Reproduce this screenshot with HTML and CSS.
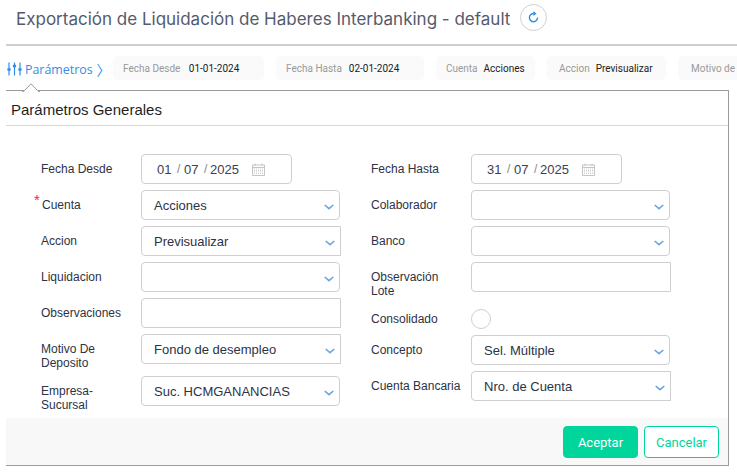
FILE: index.html
```html
<!DOCTYPE html>
<html lang="es">
<head>
<meta charset="utf-8">
<title>Exportación de Liquidación de Haberes Interbanking</title>
<link rel="stylesheet" href="styles.css">
</head>
<body>
<svg class="defs" width="0" height="0" aria-hidden="true">
  <symbol id="chev" viewBox="0 0 10 6"><path d="M.7 1 5 4.7 9.3 1" fill="none" stroke="#6aa5e2" stroke-width="1.6"/></symbol>
  <symbol id="cal" viewBox="0 0 13 13"><path d="M.5 2h12v10.5H.5zM.5 4.5h12M3 .5v2.5M10 .5v2.5" fill="none" stroke="#c4c4c4"/><path d="M2 6h9M2 7.5h9M2 9h9M2 10.5h9" stroke="#cfcfcf" stroke-dasharray="1 1"/></symbol>
</svg>
<header class="top">
  <h1 class="title">Exportación de Liquidación de Haberes Interbanking - default</h1>
  <button class="refresh" aria-label="Actualizar">
    <svg width="13" height="13" viewBox="0 0 13 13"><path d="M7.2 2.6A4.1 4.1 0 1 0 10.6 6.6" fill="none" stroke="#2f8fe8" stroke-width="1.4"/><path d="M6.4.2 9.6 2.6 6.4 5z" fill="#2f8fe8"/></svg>
  </button>
</header>
<nav class="filters">
  <div class="toggle">
    <svg width="15" height="14" viewBox="0 0 15 14"><path d="M2 .5v13M7.5 .5v13M13 .5v13" stroke="#2f8fe8" stroke-width="1.2"/><path d="M.4 7.5h3.2M5.900 4h3.200M11.400 7.500h3.200" stroke="#2f8fe8" stroke-width="2.6"/></svg>
    <span>Parámetros</span><span class="angle">〉</span>
  </div>
  <div class="chip chip-a"><span class="k">Fecha Desde</span><span class="v">01-01-2024</span></div>
  <div class="chip chip-b"><span class="k">Fecha Hasta</span><span class="v">02-01-2024</span></div>
  <div class="chip chip-c"><span class="k">Cuenta</span><span class="v">Acciones</span></div>
  <div class="chip chip-d"><span class="k">Accion</span><span class="v">Previsualizar</span></div>
  <div class="chip chip-e"><span class="k">Motivo de</span></div>
</nav>
<main class="panel">
  <svg class="notch" width="18" height="9" viewBox="0 0 18 9"><path d="M0 8.500h1.500L9 .8l7.500 7.700H18" fill="#fff" stroke="#9a9a9a"/><path d="M2.500 8.500h13" stroke="#fff" stroke-width="1.500"/></svg>
  <h2 class="panel-title">Parámetros Generales</h2>
  <div class="form">
    <div class="col">
      <div class="row"><label>Fecha Desde</label><div class="ctl date"><span class="d">01</span><i>/</i><span class="d">07</span><i>/</i><span class="y">2025</span><svg class="cal" width="13" height="13"><use href="#cal"/></svg></div></div>
      <div class="row"><label class="req">Cuenta</label><div class="ctl sel">Acciones<svg class="chev" width="10" height="6"><use href="#chev"/></svg></div></div>
      <div class="row"><label>Accion</label><div class="ctl sel wide">Previsualizar<svg class="chev" width="10" height="6"><use href="#chev"/></svg></div></div>
      <div class="row"><label>Liquidacion</label><div class="ctl sel"><svg class="chev" width="10" height="6"><use href="#chev"/></svg></div></div>
      <div class="row"><label>Observaciones</label><div class="ctl wide"></div></div>
      <div class="row tall"><label class="two">Motivo De Deposito</label><div class="ctl sel wide">Fondo de desempleo<svg class="chev" width="10" height="6"><use href="#chev"/></svg></div></div>
      <div class="row"><label class="two">Empresa-Sucursal</label><div class="ctl sel">Suc. HCMGANANCIAS<svg class="chev" width="10" height="6"><use href="#chev"/></svg></div></div>
    </div>
    <div class="col">
      <div class="row"><label>Fecha Hasta</label><div class="ctl date"><span class="d">31</span><i>/</i><span class="d">07</span><i>/</i><span class="y">2025</span><svg class="cal" width="13" height="13"><use href="#cal"/></svg></div></div>
      <div class="row"><label>Colaborador</label><div class="ctl sel"><svg class="chev" width="10" height="6"><use href="#chev"/></svg></div></div>
      <div class="row"><label>Banco</label><div class="ctl sel"><svg class="chev" width="10" height="6"><use href="#chev"/></svg></div></div>
      <div class="row"><label class="two">Observación Lote</label><div class="ctl wide"></div></div>
      <div class="row radio-row"><label>Consolidado</label><span class="radio"></span></div>
      <div class="row"><label>Concepto</label><div class="ctl sel">Sel. Múltiple<svg class="chev" width="10" height="6"><use href="#chev"/></svg></div></div>
      <div class="row"><label>Cuenta Bancaria</label><div class="ctl sel wide">Nro. de Cuenta<svg class="chev" width="10" height="6"><use href="#chev"/></svg></div></div>
    </div>
  </div>
  <footer class="foot">
    <button class="btn ok">Aceptar</button>
    <button class="btn cancel">Cancelar</button>
  </footer>
</main>
</body>
</html>
```
FILE: styles.css
```css
* { box-sizing: border-box; }
html, body { margin: 0; height: 474px; overflow: hidden; background: #fff; }
body { font-family: "Liberation Sans", Arial, sans-serif; color: #2c3345; padding-left: 6px; }
.defs { position: absolute; }

.top { height: 46px; border-bottom: 2px solid #cfcfcf; display: flex; align-items: flex-start; padding: 4px 0 0 10px; }
.title { margin: 0; font: 400 17px/30px Inter, sans-serif; color: #555b6b; white-space: nowrap; }
.refresh { width: 27px; height: 27px; margin-left: 10px; border: 1px solid #cfcfcf; border-radius: 50%; background: #fff; padding: 0; display: flex; align-items: center; justify-content: center; }

.filters { height: 44px; display: flex; align-items: center; width: 731px; overflow: hidden; }
.toggle { width: 107px; flex: none; display: flex; align-items: center; color: #2f8fe8; font: 12.4px "Open Sans", sans-serif; padding: 2px 0 0 1px; }
.toggle svg { margin-right: 3px; }
.angle { margin-left: 4px; font-size: 14px; font-family: "Noto Sans CJK SC", sans-serif; width: 14px; }
.chip { height: 24px; background: #fafafa; border-radius: 5px; margin-right: 12px; flex: none; display: flex; align-items: center; font: 10px Roboto, sans-serif; padding-left: 10px; white-space: nowrap; overflow: hidden; }
.k { color: #999; margin-right: 6px; }
.v { color: #222; }
.chip-a { width: 151px; }
.chip-a .k { margin-right: 8.500px; }
.chip-b { width: 148px; }
.chip-b .k { margin-right: 7px; }
.chip-c { width: 99px; }
.chip-d { width: 119px; padding-left: 12px; }
.chip-e { width: 59px; padding-left: 13px; margin-right: 0; border-radius: 5px 0 0 5px; }
.chip-e .k { margin-right: 0; }

.panel { position: relative; width: 723px; height: 376px; border-top: 1px solid #9a9a9a; border-right: 1px solid #9a9a9a; border-bottom: 1px solid #9a9a9a; display: flex; flex-direction: column; }
.notch { position: absolute; left: 16px; top: -8px; }
.panel-title { margin: 0; height: 35px; padding-left: 5px; font: 400 15px/38px "Liberation Sans", sans-serif; color: #1f1f1f; border-bottom: 1px solid #d8d8d8; }

.form { flex: 1; display: flex; padding: 28px 0 0 35px; }
.col { width: 330px; flex: none; display: flex; flex-direction: column; gap: 6px; }
.row { display: flex; height: 30px; align-items: flex-start; }
.row.tall { height: 36px; }
.row label { width: 100px; flex: none; font-size: 12px; line-height: 14px; padding-top: 8px; position: relative; }
.row label.two { padding-right: 20px; }
.row label.req { padding-left: 1px; }
.req::before { content: "*"; position: absolute; left: -7px; top: 3px; color: #f0245e; font-size: 15px; }
.ctl { position: relative; width: 199px; height: 30px; background: #fff; border: 1px solid #cfcfcf; border-radius: 4px; font-size: 13px; line-height: 29px; padding-left: 12px; }
.ctl.wide { width: 200px; border-radius: 4px 0 0 4px; }
.chev { position: absolute; right: 5px; top: 13px; }
.date { width: 151px; padding-left: 15px; display: flex; align-items: center; color: #3b4150; }
.date i { font-style: normal; color: #888; width: 7px; margin-left: 6px; font-size: 12px; }
.date .d { width: 14px; }
.date .y { margin-left: -1px; }
.cal { margin-left: 13px; }

.radio-row { height: 31px; align-items: center; padding-top: 11px; }
.radio-row label { padding-top: 0; }
.radio { width: 20px; height: 20px; border: 1px solid #cfcfcf; border-radius: 50%; background: #fff; }

.foot { height: 47px; background: #f8f8f8; display: flex; justify-content: flex-end; align-items: flex-start; gap: 6px; padding: 8px 9px 0 0; }
.btn { width: 75px; height: 32px; border-radius: 4px; font: 13px Roboto, sans-serif; padding: 0; }
.ok { background: #00d69b; border: 1px solid #00d69b; color: #fff; }
.cancel { background: #fff; border: 1px solid #00d69b; color: #00d69b; }
```
